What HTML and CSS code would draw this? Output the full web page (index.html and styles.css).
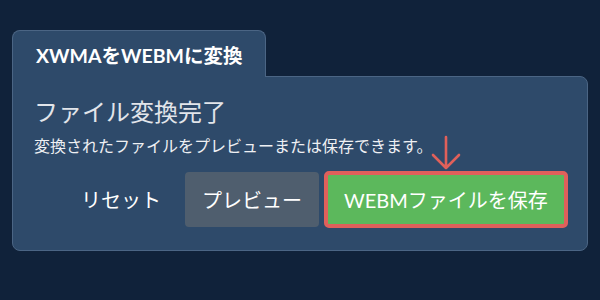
FILE: index.html
```html
<!DOCTYPE html>
<html lang="ja">
<head>
<meta charset="utf-8">
<link rel="stylesheet" href="styles.css">
</head>
<body>
<div class="wrap">
  <div class="tab">XWMAをWEBMに変換</div>
  <div class="panel">
    <h2 class="heading">ファイル変換完了</h2>
    <p class="desc">変換されたファイルをプレビューまたは保存できます。</p>
    <div class="actions">
      <button class="btn btn-reset">リセット</button>
      <button class="btn btn-preview">プレビュー</button>
      <div class="save-wrap">
        <svg class="arrow" width="32" height="36" viewBox="0 0 32 36">
          <path d="M16 2 V33 M3 20 L16 33 L29 20" fill="none" stroke="#e0605a" stroke-width="2.6" stroke-linecap="round" stroke-linejoin="round"/>
        </svg>
        <button class="btn btn-save">WEBMファイルを保存</button>
      </div>
    </div>
  </div>
</div>
</body>
</html>
```

FILE: styles.css
```css
* { box-sizing: border-box; }
html, body {
  margin: 0;
  padding: 0;
  background: #10223a;
  width: 600px;
  height: 300px;
  overflow: hidden;
  font-family: Lato, "Noto Sans CJK JP", sans-serif;
}
.wrap {
  padding: 30px 0 0 12px;
  width: 588px;
}
.tab {
  position: relative;
  z-index: 2;
  display: inline-block;
  height: 47px;
  margin-bottom: -1px;
  padding: 13px 22px 0 23px;
  background: #2e4a6a;
  border: 1px solid #4b6584;
  border-bottom: none;
  border-radius: 8px 8px 0 0;
  color: #ffffff;
  font-weight: 700;
  font-size: 19.5px;
  line-height: 24px;
}
.panel {
  position: relative;
  background: #2e4a6a;
  border: 1px solid #4b6584;
  border-radius: 0 8px 8px 8px;
  padding: 19px 19px 19px 21px;
  height: 175px;
}
.heading {
  margin: 0;
  font-weight: 400;
  font-size: 24px;
  line-height: 32px;
  color: #e2e5ea;
}
.desc {
  margin: 7px 0 0 0;
  font-size: 16px;
  line-height: 22px;
  color: #eef0f3;
}
.actions {
  display: flex;
  justify-content: flex-end;
  align-items: center;
  gap: 5px;
  margin-top: 14px;
}
.btn {
  font-family: Lato, "Noto Sans CJK JP", sans-serif;
  font-size: 20px;
  color: #ffffff;
  border: none;
  background: transparent;
  height: 55px;
  padding: 0 19px;
  border-radius: 4px;
  line-height: 24px;
}
.btn-preview {
  background: #4f5e6e;
  width: 134px;
  padding: 0;
}
.save-wrap {
  position: relative;
}
.btn-save {
  background: #5cb85c;
  border: 4px solid #df605b;
  height: 57px;
  width: 244px;
  border-radius: 5px;
  padding: 0;
}
.arrow {
  position: absolute;
  left: 106px;
  top: -36px;
}
```
